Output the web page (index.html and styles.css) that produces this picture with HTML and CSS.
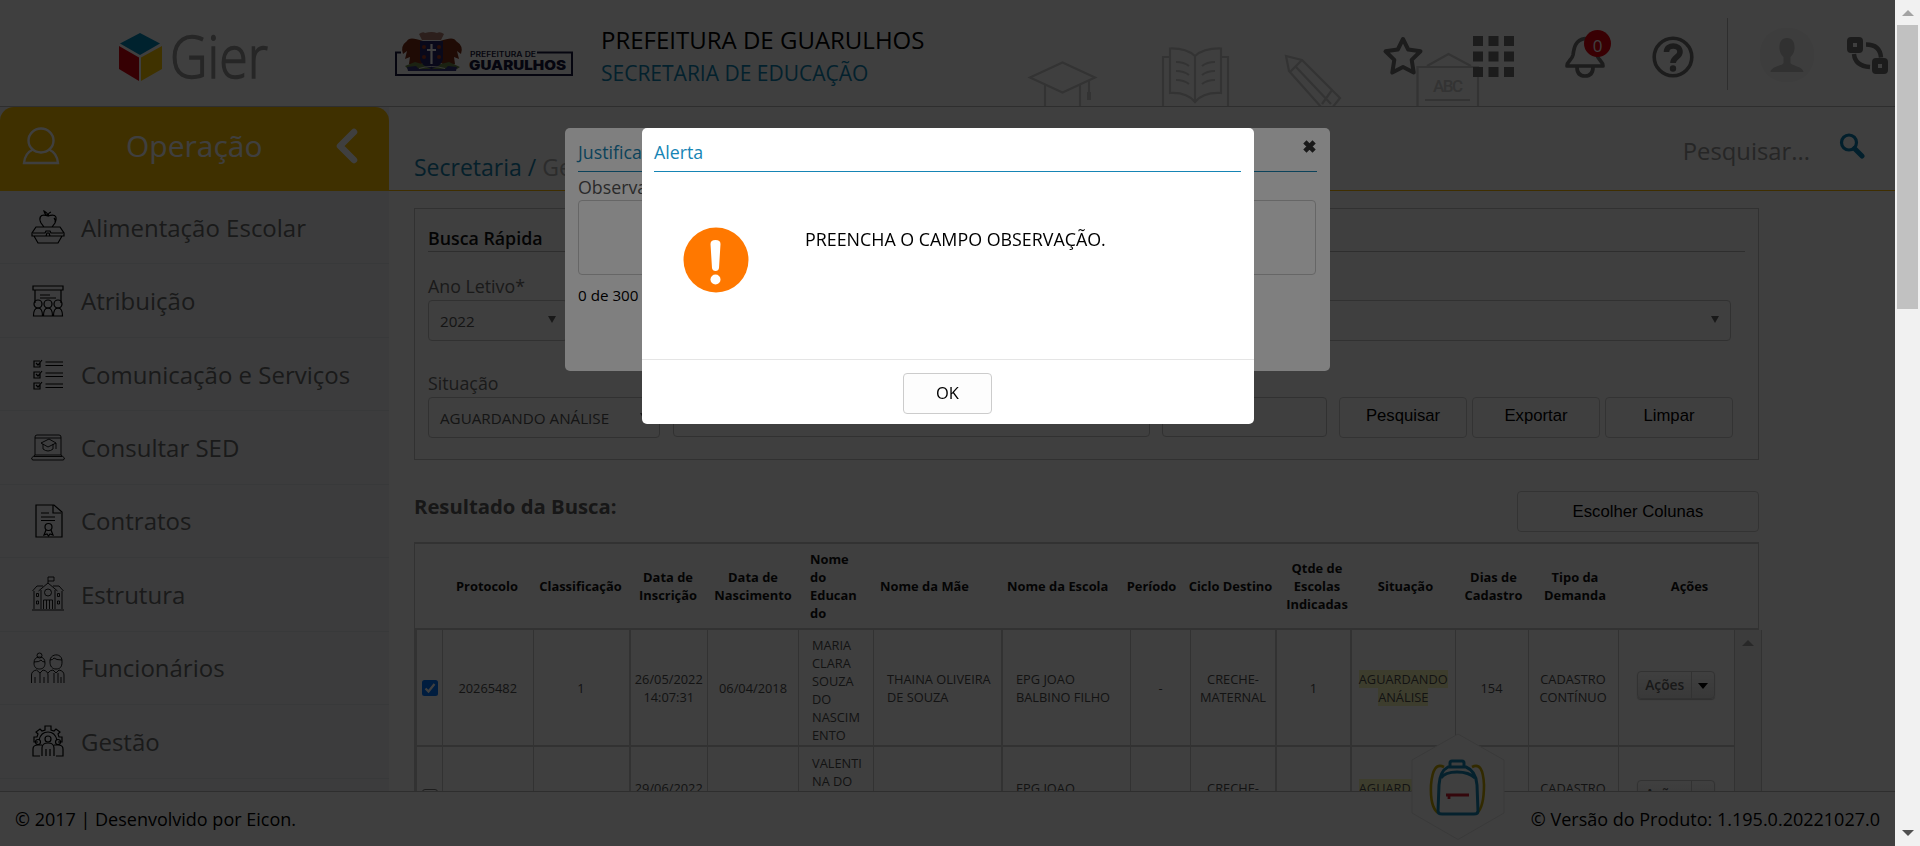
FILE: index.html
```html
<!DOCTYPE html>
<html lang="pt-BR">
<head>
<meta charset="utf-8">
<title>Gier</title>
<link rel="stylesheet" href="styles.css">
</head>
<body>
<div class="page">
  <header class="top">
    <svg class="gier" width="156" height="54" viewBox="0 0 156 54">
      <path d="M21 3L41 13.5 21 25 1 13.5z" fill="#0088b8"/>
      <path d="M0 16L20 27.5V51L0 39z" fill="#d8000f"/>
      <path d="M43 16L22 27.5V51L43 39z" fill="#ffc800"/>
      <text x="51" y="48" textLength="98" lengthAdjust="spacingAndGlyphs" class="gier-text">Gier</text>
    </svg>
    <svg class="city" width="180" height="46" viewBox="0 0 180 46">
      <path d="M7 20.500H2V43h176V20.500H143" fill="none" stroke="#16163c" stroke-width="2"/>
      <path d="M29 9Q15 4 13 9 6 14 9 22l4-3-2 8 5-2-1 7 7 3 7-4zM46 9Q60 4 62 9 70 14 67 22l-4-3 2 8-5-2 1 7-7 3-7-4z" fill="#7d2e14"/>
      <path d="M25 2q4-3 6-1 7-2 12 0 3-2 7 1l-3 6H28z" fill="#b07d70"/>
      <path d="M11 34l10-4 7 2 19 0 8-2 11 5-3 2H14z" fill="#6c8a4a"/>
      <path d="M26 9h23v18q-1 7-11.500 10Q27 34 26 27z" fill="#25256b"/>
      <path d="M37.500 12v20M33 18h9" stroke="#fff" stroke-width="2.200" fill="none"/>
      <circle cx="30" cy="15" r="2" fill="#a33c20"/><circle cx="45" cy="15" r="2" fill="#a33c20"/><circle cx="30" cy="25" r="2" fill="#a33c20"/><circle cx="45" cy="25" r="2" fill="#a33c20"/>
      <path d="M13 35l9-1 3 3h26l3-3 9 1-1 4H14z" fill="#35357c"/><path d="M25 36.500q12-4 26 0" stroke="#ddd" fill="none"/>
      <text x="76" y="25" textLength="66" lengthAdjust="spacingAndGlyphs" class="city-a">PREFEITURA DE</text>
      <text x="75" y="37.500" textLength="97" lengthAdjust="spacingAndGlyphs" class="city-b">GUARULHOS</text>
    </svg>
    <div class="org"><div class="org-a">PREFEITURA DE GUARULHOS</div><div class="org-b">SECRETARIA DE EDUCAÇÃO</div></div>
    <svg class="decor" width="460" height="60" viewBox="1025 46 460 60" fill="none" stroke="#ccc" stroke-width="2.200">
      <path d="M1030 77.500L1062.500 62.500 1095 77.500 1062.500 92.500zM1045 85v22M1080 85v22M1089 80v18"/><path d="M1089 92v8" stroke-width="4"/>
      <path d="M1170 57h-7v50M1221 57h7v50M1195 56Q1186 48 1170 48.500V93q17-1 25 9 8-10 26-9V48.500q-17-.500-26 7.500zM1195 56v46M1176 62q8 0 13 4M1176 71q8 0 13 4M1176 80q8 0 13 4M1215 62q-8 0-13 4M1215 71q-8 0-13 4M1215 80q-8 0-13 4"/>
      <path d="M1286 56l16 4 38 38-8 10h-10l-33-37zM1302 60l-12 12M1296 67l35 37M1332 90l-10 14"/>
      <path d="M1417.500 107V67H1478v40M1427 66l21.500-12L1471 66M1425 100h45"/>
      <text x="1433" y="92" textLength="30" class="abc">ABC</text>
    </svg>
    <div class="tools">
      <svg class="t-star" width="42" height="42" viewBox="0 0 42 42"><path d="M21 4l5.200 10.500 12.300 1.800-8.800 8.600 2 12.600L21 32l-10.700 5.500 2-12.600-8.800-8.600 12.300-1.800z" fill="none" stroke="#707070" stroke-width="4" stroke-linejoin="round"/></svg>
      <svg class="t-grid" width="41" height="41" viewBox="0 0 41 41" fill="#707070"><path d="M0 0h10v10H0zM15.500 0h10v10h-10zM31 0h10v10H31zM0 15.500h10v10H0zM15.500 15.500h10v10h-10zM31 15.500h10v10H31zM0 31h10v10H0zM15.500 31h10v10h-10zM31 31h10v10H31z"/></svg>
      <div class="t-bell"><svg width="40" height="42" viewBox="0 0 40 42" fill="none" stroke="#707070" stroke-width="3.700" stroke-linejoin="round"><path d="M20 2.500C10 4 9 12 8 19 7 24 2 25 2 30h36c0-5-5-6-6-11C31 12 30 4 20 2.500z"/><path d="M12 31q0 9 8 9t8-9"/></svg><span class="badge">0</span></div>
      <svg class="t-help" width="42" height="42" viewBox="0 0 42 42" fill="none" stroke="#707070"><circle cx="21" cy="21" r="18.800" stroke-width="3.600"/><path d="M14.500 16c0-8 13.500-8 13.500 0 0 5-7 5-7 11" stroke-width="5.600"/><circle cx="21" cy="32.500" r="1.500" stroke-width="3.400"/></svg>
      <span class="t-line"></span>
      <svg class="t-user" width="54" height="54" viewBox="0 0 54 54"><rect width="54" height="54" rx="25" fill="#f4f4f4"/><path d="M27 10c-6 0-8 5-7.500 11 .500 4 2 6 4 8v6c-1 3-12 3-13 9h33c-1-6-12-6-13-9v-6c2-2 3.500-4 4-8C35 15 33 10 27 10z" fill="#c4c4c4"/></svg>
      <svg class="t-swap" width="42" height="38" viewBox="0 0 42 38" fill="none" stroke="#707070"><rect x="3" y="3" width="10" height="10" rx="1" stroke-width="6"/><rect x="28" y="24" width="10" height="10" rx="1" stroke-width="6"/><path d="M19 7.500q14 0 15 13M7 17q1 12 16 13" stroke-width="4.400"/></svg>
    </div>
  </header>

  <div class="body">
    <aside class="side">
      <div class="side-head">
        <svg width="38" height="38" viewBox="0 0 38 38" fill="none" stroke="#fff" stroke-width="2.400"><ellipse cx="19" cy="13.500" rx="12.500" ry="12"/><path d="M11 22.500Q3 26 2 36h34q-1-10-9-13.500"/></svg>
        <span>Operação</span>
        <svg width="24" height="38" viewBox="0 0 24 38" fill="none" stroke="#fff" stroke-width="6.500" stroke-linecap="round" stroke-linejoin="round"><path d="M19 5L5 19l14 14"/></svg>
      </div>
      <nav class="menu">
        <a><svg viewBox="0 0 36 36"><path d="M18 7c-9-3-9 3-7 7l3 4h8l3-4c2-5 2-10-7-7zM18 7q0-3-4-5 1 4 4 5 0-3 3-4M24 9q2 2 1 5M6 18h24l4 6v3H2v-3zM3 24h12l1-2h4l1 2h12M4 27l4 7h20l4-7M12 27h4l1-3h2l1 3h4"/></svg>Alimentação Escolar</a>
        <a><svg viewBox="0 0 36 36"><path d="M3 3h30v4H3zM5 7v13M31 7v13M10 12h10M10 15h16"/><circle cx="8" cy="21" r="4"/><circle cx="18" cy="21" r="4"/><circle cx="28" cy="21" r="4"/><path d="M3.500 33q0-8 4.500-8t4.500 8zM13.500 33q0-8 4.500-8t4.500 8zM23.500 33q0-8 4.500-8t4.500 8z"/></svg>Atribuição</a>
        <a><svg viewBox="0 0 36 36"><path d="M10 5H4v6h6V7M6 7l2 2 4-5M10 16H4v6h6v-4M6 18l2 2 4-5M10 27H4v6h6v-4M6 29l2 2 4-5M15.500 6H33M15.500 9.500H33M15.500 17H33M15.500 20.500H33M15.500 28H33M15.500 31.500H33"/></svg>Comunicação e Serviços</a>
        <a><svg class="thin" viewBox="0 0 36 36"><path d="M5 25V7q0-2 2-2h22q2 0 2 2v18M5 8h26M1.500 28L5 25h26l3.500 3-1 2h-31zM4 26.500h28M11 13l8-4 7 4-8 4zM13 14v5q5 4 10 0v-5M26 13v6"/></svg>Consultar SED</a>
        <a><svg viewBox="0 0 36 36"><path d="M6 2h18l8 7v25H6zM23 2v8h8M11 10h8M11 14h14M11 17.500h14"/><circle cx="18.500" cy="24" r="3.500"/><path d="M16 27l-2 5 3-1 1.500 2 1.500-2 3 1-2-5"/></svg>Contratos</a>
        <a><svg class="thin" viewBox="0 0 36 36"><path d="M2 34h32M4 33V15M32 33V15M2.500 15L7 10h6M33.500 15L29 10h-6M11 33V14M25 33V14M8.500 15L18 7l9.500 8M18 7V1h6v4h-6M13.500 33v-9h9v9M16.500 24v9M19.500 24v9M6.500 17.500h2v3h-2zM6.500 25h2v3h-2zM27.500 17.500h2v3h-2zM27.500 25h2v3h-2z"/><circle cx="18" cy="16.500" r="3.500"/></svg>Estrutura</a>
        <a><svg class="thin" viewBox="0 0 36 36"><circle cx="9.500" cy="5.500" r="2.500"/><path d="M4 13q0-6 5.500-6t5.500 6c0 4-2 6-5.500 6S4 17 4 13zM4 12q6 0 7-2 1 2 4 2M1.500 33v-8q0-4 5-5l3.500 3 3-3q5 1 5 5v8M5 33v-6M14 33v-6M10 23v10M20 12c-1-9 13-10 12 0 0 5-2 7-6 7s-6-3-6-7zM20 10q3 0 4-2 2 2 8 2M18 23q2-3 5-3l3 3 3-3q5 1 5 5v8M24 33V23M28 33V23M31 33v-6"/></svg>Funcionários</a>
        <a><svg viewBox="0 0 36 36"><path d="M8 19H4v-5h3l1-3-2-2 4-3 2 2 3-1V3h6v4l3 1 2-2 4 3-2 2 1 3h3v5h-4M9 17q2-8 9-8t9 8"/><circle cx="18" cy="16" r="3"/><circle cx="8" cy="19" r="2.500"/><circle cx="28" cy="19" r="2.500"/><path d="M12 33V25q0-5 6-5t6 5v8M10 33H3v-7q0-4 5-4h4M26 33h7v-7q0-4-5-4h-4M16 33v-7M20 33v-7"/></svg>Gestão</a>
      </nav>
    </aside>

    <main class="main">
      <div class="crumbs">
        <div class="crumb"><b>Secretaria /</b> Gestão</div>
        <div class="search"><span>Pesquisar...</span>
          <svg width="26" height="26" viewBox="0 0 26 26" fill="none" stroke="#0a7fb0"><circle cx="10" cy="9.500" r="7.500" stroke-width="3.200"/><path d="M15.500 15.500L23 23" stroke-width="5" stroke-linecap="round"/></svg></div>
      </div>

      <section class="panel">
        <h2>Busca Rápida</h2>
        <div class="row1">
          <div class="field"><label>Ano Letivo*</label><div class="sel"><span>2022</span><i></i></div></div>
          <div class="field grow"><label>&nbsp;</label><div class="sel"><span></span><i></i></div></div>
        </div>
        <div class="row2">
          <div class="field w232"><label>Situação</label><div class="sel"><span>AGUARDANDO ANÁLISE</span><i></i></div></div>
          <div class="inp w478"></div><div class="inp w165"></div>
          <div class="btns"><button>Pesquisar</button><button>Exportar</button><button>Limpar</button></div>
        </div>
      </section>

      <div class="result"><h3>Resultado da Busca:</h3><button>Escolher Colunas</button></div>

      <div class="thead">
        <span></span><span>Protocolo</span><span>Classificação</span><span>Data de<br>Inscrição</span><span>Data de<br>Nascimento</span><span class="l">Nome<br>do<br>Educan<br>do</span><span class="l">Nome da Mãe</span><span class="l">Nome da Escola</span><span>Período</span><span>Ciclo Destino</span><span>Qtde de<br>Escolas<br>Indicadas</span><span>Situação</span><span>Dias de<br>Cadastro</span><span>Tipo da<br>Demanda</span><span>Ações</span>
      </div>
      <div class="tbody">
        <div class="rows">
          <div class="tr r1">
            <span class="chk"><svg width="16" height="16" viewBox="0 0 16 16"><rect width="16" height="16" rx="2.500" fill="#0075ff"/><path d="M3.500 8.500L6.500 11.500 12.500 4" fill="none" stroke="#fff" stroke-width="2.200"/></svg></span>
            <span>20265482</span><span>1</span><span>26/05/2022<br>14:07:31</span><span>06/04/2018</span><span class="l name">MARIA<br>CLARA<br>SOUZA<br>DO<br>NASCIM<br>ENTO</span><span class="l">THAINA OLIVEIRA<br>DE SOUZA</span><span class="l">EPG JOAO<br>BALBINO FILHO</span><span>-</span><span>CRECHE-<br>MATERNAL</span><span>1</span><span><span><mark>AGUARDANDO<br>ANÁLISE</mark></span></span><span>154</span><span>CADASTRO<br>CONTÍNUO</span><span><span class="act"><b>Ações</b><em></em></span></span>
          </div>
          <div class="tr r2">
            <span class="chk"><span class="box"></span></span>
            <span></span><span></span><span>29/06/2022<br>&nbsp;</span><span></span><span class="l name">VALENTI<br>NA DO<br>&nbsp;<br>&nbsp;<br>&nbsp;</span><span></span><span class="l">EPG JOAO<br>&nbsp;</span><span></span><span>CRECHE-<br>&nbsp;</span><span></span><span><span><mark>AGUARDANDO</mark><br>&nbsp;</span></span><span></span><span>CADASTRO<br>&nbsp;</span><span><span class="act"><b>Ações</b><em></em></span></span>
          </div>
        </div>
        <div class="vbar"><i></i></div>
      </div>
    </main>
  </div>

  <footer class="foot"><span>© 2017 | Desenvolvido por Eicon.</span><span>© Versão do Produto: 1.195.0.20221027.0</span></footer>
  <svg class="hex" width="94" height="108" viewBox="0 0 94 108" fill="none">
    <path d="M47 1L93 27V80L47 106.500 1 80V27z" fill="#fdfdfd" stroke="#e6e6e6"/>
    <path d="M33 34Q22 28 20 52 19 74 27 80M61 34Q72 28 73 52 73 74 66 80" stroke="#c9aa00" stroke-width="2.600"/>
    <path d="M39 34v-4q0-2 2-2h10q2 0 2 2v4M37 34h18Q65 38 66 52l1 26q0 3-4 3H31q-4 0-4-3l1-26Q29 38 37 34zM30 45Q34 39 46 39t18 6" stroke="#1487b4" stroke-width="3"/>
    <path d="M35 62H58M38 62v4" stroke="#d21f30" stroke-width="2.800"/>
  </svg>
</div>

<div class="scroll"><i class="up"></i><div class="thumb"></div><i class="down"></i></div>

<div class="shade"></div>
<div class="modal back">
  <div class="m-title">Justificativa<svg width="15" height="15" viewBox="0 0 13 13"><path d="M2.500 2.500l8 8M10.500 2.500l-8 8" stroke="#333" stroke-width="4"/></svg></div>
  <label>Observação*</label>
  <div class="area"></div>
  <div class="count">0 de 300</div>
</div>
<div class="shade"></div>
<div class="modal alert">
  <div class="m-title">Alerta</div>
  <div class="m-body">
    <svg width="66" height="66" viewBox="0 0 66 66"><circle cx="33" cy="33" r="32.500" fill="#ff7800"/><path d="M27.500 17q0-4 5-4t5 4l-1.500 24q-.500 3-3.500 3t-3.500-3z" fill="#fff"/><circle cx="32.500" cy="52.500" r="5" fill="#fff"/></svg>
    <p>PREENCHA O CAMPO OBSERVAÇÃO.</p>
  </div>
  <div class="m-foot"><button>OK</button></div>
</div>
</body>
</html>
```
FILE: styles.css
```css
* { box-sizing: border-box; }
body { margin: 0; display: flex; height: 846px; overflow: hidden; font-family: "Open Sans", "Noto Sans", sans-serif; color: #000; background: #fff; }
h2, h3, p { margin: 0; }
i, em { font-style: normal; }
.page { position: relative; width: 1895px; height: 846px; display: flex; flex-direction: column; background: #fdfdfd; }

/* header */
.top { height: 107px; flex: none; display: flex; border-bottom: 1px solid #bbb; position: relative; overflow: hidden; }
.gier { margin: 30px 0 0 119px; flex: none; }
.gier-text { font-family: "Open Sans"; font-weight: 300; font-size: 58px; fill: #999; stroke: #999; stroke-width: 1.4px; }
.city { margin: 32px 0 0 119px; flex: none; }
.city-a { font: 600 7.500px Inter, sans-serif; fill: #16163c; }
.city-b { font: 900 13.500px Inter, sans-serif; fill: #16163c; }
.org { margin: 23px 0 0 27px; width: 400px; flex: none; white-space: nowrap; }
.org-a { font-size: 24px; line-height: 33px; }
.org-b { font-size: 21px; line-height: 34px; color: #0e86b5; }
.decor { position: absolute; left: 1025px; top: 46px; }
.abc { font: 500 17px Roboto, sans-serif; fill: #ccc; stroke: none; }
.tools { position: relative; margin-left: 381px; display: flex; flex: none; height: 106px; align-items: flex-start; }
.t-star { margin: 35px 0 0 0; }
.t-grid { margin: 36px 0 0 49px; }
.t-bell { position: relative; margin: 36px 0 0 51px; width: 40px; }
.badge { position: absolute; left: 19px; top: -6px; width: 27px; height: 27px; border-radius: 50%; background: #e6000c; color: #fff; font-size: 17px; line-height: 32px; text-align: center; }
.t-help { margin: 36px 0 0 47px; }
.t-line { width: 1px; height: 72px; margin: 18px 0 0 33px; background: #bbb; }
.t-user { margin: 28px 0 0 32px; }
.t-swap { margin: 37px 0 0 33px; }

/* sidebar */
.body { display: flex; height: 684px; flex: none; overflow: hidden; }
.side { width: 389px; flex: none; background: #f0f3f7; }
.side-head { height: 84px; background: #ffc000; border-radius: 14px 14px 0 0; display: flex; align-items: center; padding: 0 30px 6px 22px; color: #fff; font-size: 30px; }
.side-head span { margin: -1px 0 0 66px; flex: 1; }
.menu a { display: flex; align-items: center; height: 73.450px; border-bottom: 1px solid #e0e4ea; padding-left: 30px; font-size: 24px; color: #6b6b6b; white-space: nowrap; }
.menu svg { width: 36px; height: 36px; margin-right: 15px; fill: none; stroke: #000; stroke-width: 1.200; }
.menu svg.thin { stroke-width: .9; }

/* main */
.main { flex: 1; padding-left: 25px; min-width: 0; }
.crumbs { display: flex; justify-content: space-between; height: 84px; border-bottom: 1px solid #ffb900; margin-left: -25px; padding-left: 25px; }
.crumb { font-size: 23px; line-height: 32px; margin-top: 44px; color: #b0b0b0; white-space: nowrap; }
.crumb b { font-weight: 400; color: #1782ad; }
.search { display: flex; color: #999; font-size: 23.800px; line-height: 32px; padding: 28px 30px 0 0; }
.search svg { margin: -2px 0 0 29px; }
.panel { width: 1345px; height: 252px; margin-top: 17px; border: 1px solid #c4c4c4; padding: 15px 13px 0; }
.panel h2 { font-size: 17.800px; font-weight: 600; line-height: 29px; height: 28px; border-bottom: 1px solid #bbb; color: #111; }
.row1, .row2 { display: flex; }
.row1 { margin-top: 21px; gap: 12px; width: 1303px; }
.row2 { margin-top: 29px; align-items: flex-end; }
.field { width: 140px; }
.field.grow { flex: 1; width: auto; }
.w232 { width: 232px; }
.field label { display: block; font-size: 17.800px; line-height: 26px; color: #6b6b6b; margin-bottom: 1px; }
.sel { height: 41px; border: 1px solid #c4c4c4; border-radius: 4px; display: flex; align-items: center; justify-content: space-between; padding: 0 11px 0 11px; font-size: 15.200px; color: #555; white-space: nowrap; }
.sel i { border: 4.500px solid transparent; border-top: 7px solid #666; border-bottom: 0; margin-bottom: 2px; }
.inp { height: 40px; border: 1px solid #c4c4c4; border-radius: 4px; margin: 0 0 1px 13px; }
.w478 { width: 477px; }
.w165 { width: 165px; margin-left: 12px; }
button { font: 16.700px "Liberation Sans", Arial, sans-serif; background: none; border: 1px solid #ccc; border-radius: 4px; height: 41px; padding: 0; color: #000; }
.btns { display: flex; gap: 5px; margin-left: 12px; }
.btns button { width: 128px; padding-bottom: 3px; }
.result { display: flex; justify-content: space-between; width: 1345px; margin-top: 31px; height: 42px; }
.result h3 { font-size: 20.300px; line-height: 30px; color: #5e5e5e; }
.result button { width: 242px; }

/* table */
.thead { margin-top: 9px; width: 1345px; height: 88px; border: 1px solid #c8c8c8; border-width: 2px 1px; display: grid; grid-template-columns: 28px 88px 99px 76px 94px 70px 127px 126px 57px 101px 72px 105px 71px 92px 1fr; align-items: center; font-size: 12.900px; font-weight: 700; line-height: 18px; color: #111; text-align: center; white-space: nowrap; }
.thead .l { text-align: left; padding-left: 10px; }
.tbody { display: flex; width: 1348px; border: 1px solid #c8c8c8; border-width: 0 1px; height: 161px; overflow: hidden; }
.rows { width: 1320px; flex: none; border-left: 2px solid #c8c8c8; }
.tr { display: grid; grid-template-columns: 26px 90.500px 97px 77.500px 91px 75px 129px 128px 60px 86px 75px 103.500px 73px 90px 1fr; border-bottom: 2px solid #c8c8c8; font-size: 12.800px; line-height: 18px; color: #4e4e4e; text-align: center; white-space: nowrap; }
.tr > span { border-right: 1px solid #c8c8c8; display: flex; align-items: center; justify-content: center; }
.tr > span:nth-child(3), .tr > span:nth-child(7), .tr > span:nth-child(10), .tr > span:nth-child(11) { border-right-width: 2px; }
.tr > .l { justify-content: flex-start; text-align: left; padding-left: 13px; }
.tr > .name { padding-top: 5px; }
.r1 { height: 117px; }
.r2 { height: 101px; }
mark { background: #f6f6b4; color: inherit; }
.box { width: 16px; height: 16px; border: 1px solid #767676; border-radius: 3px; }
.act { display: flex; width: 78px; height: 28px; border: 1px solid #c8c8c8; border-radius: 4px; background: linear-gradient(#fff, #e4e4e4); box-shadow: 0 1px 1px #bbb; margin-top: -5px; }
.act b { width: 54px; border-right: 1px solid #c8c8c8; font-size: 13.800px; font-weight: 600; line-height: 25px; color: #666; }
.act em { border: 5px solid transparent; border-top: 6px solid #000; border-bottom: 0; margin: 11px 0 0 6px; height: 0; }
.vbar { flex: 1; background: #f1f1f1; }
.vbar i { display: block; width: 0; border: 6px solid transparent; border-bottom: 6px solid #a3a3a3; border-top: 0; margin: 10px 0 0 7px; }

.foot { height: 55px; border-top: 1px solid #bbb; display: flex; justify-content: space-between; align-items: center; padding: 0 15px; font-size: 18px; background: #fdfdfd; }
.hex { position: absolute; left: 1411px; top: 733px; }

/* window scrollbar */
.scroll { width: 25px; background: #f1f1f1; display: flex; flex-direction: column; align-items: center; }
.scroll .up { border: 6px solid transparent; border-bottom: 6px solid #a3a3a3; border-top: 0; margin: 10px 0 9px; }
.thumb { width: 21px; height: 284px; background: #c1c1c1; }
.scroll .down { border: 6px solid transparent; border-top: 6px solid #505050; border-bottom: 0; margin: auto 0 10px; }

/* dialogs */
.shade { position: fixed; left: 0; top: 0; width: 1895px; height: 846px; background: rgba(0, 0, 0, .5); }
.modal { position: fixed; top: 128px; background: #fff; border-radius: 5px; }
.back { left: 565px; width: 765px; height: 243px; padding: 0 13px; }
.alert { left: 642px; width: 612px; height: 296px; padding: 0 13px 0 12px; display: flex; flex-direction: column; }
.m-title { height: 44px; border-bottom: 1px solid #1685b5; color: #1685b5; font-size: 17.800px; line-height: 49px; display: flex; justify-content: space-between; }
.m-title svg { margin-top: 11px; }
.back label { display: block; font-size: 17.800px; line-height: 24px; margin-top: 3px; color: #555; }
.area { height: 75px; width: 738px; margin-top: 1px; border: 1px solid #ccc; border-radius: 4px; }
.count { font-size: 15.200px; line-height: 20px; margin-top: 10px; }
.m-body { flex: 1; display: flex; padding: 55px 0 0 29px; }
.m-body p { font-size: 17.850px; line-height: 24px; margin-left: 56px; }
.m-foot { height: 65px; margin: 0 -13px 0 -12px; border-top: 1px solid #e5e5e5; text-align: center; padding-top: 13px; }
.m-foot button { width: 89px; background: #fdfdfd; font: 16.500px "Open Sans"; margin-left: -1px; padding-bottom: 2px; }
```
